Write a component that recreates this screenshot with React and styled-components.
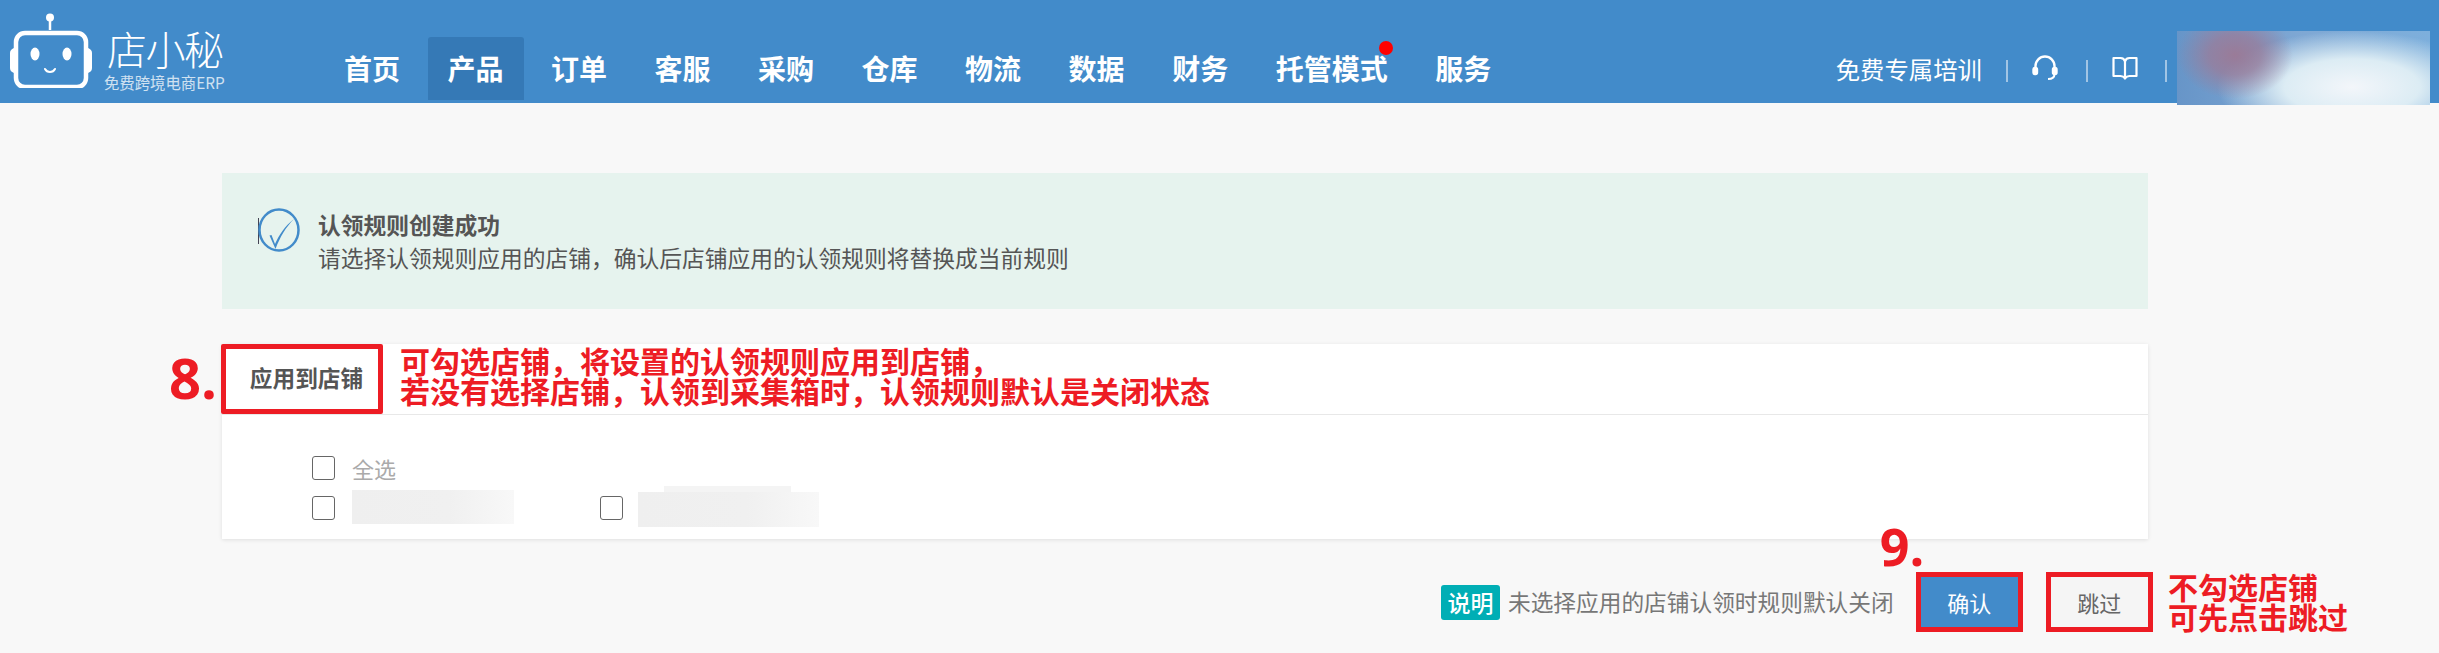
import React from 'react';
import styled, { createGlobalStyle } from 'styled-components';

const FONT = '"Noto Sans CJK SC", "Noto Sans", sans-serif';
const RED = '#ed1c24';

const Global = createGlobalStyle`
  html, body { margin: 0; padding: 0; background: #f8f8f8; }
  body { font-family: ${FONT}; width: 2439px; height: 653px; overflow: hidden; }
  * { box-sizing: border-box; }
`;

const Header = styled.header`
  display: flex;
  align-items: flex-start;
  height: 103px;
  background: #428bca;
  color: #fff;
`;
const Logo = styled.div`
  display: flex;
  width: 324px;
  flex: none;
  padding: 12px 0 0 9px;
`;
const LogoText = styled.div`
  margin: 13px 0 0 11px;
  display: flex;
  flex-direction: column;
`;
const LogoName = styled.div`
  font-size: 40px;
  line-height: 46px;
  font-weight: 300;
  letter-spacing: -1.500px;
  white-space: nowrap;
  margin-left: 3px;
`;
const LogoSub = styled.div`
  font-size: 16px;
  line-height: 18px;
  margin-top: 2px;
  opacity: 0.75;
  white-space: nowrap;
  transform: scaleX(0.96);
  transform-origin: left;
`;
const Nav = styled.nav`
  display: flex;
  gap: 7.5px;
  margin-top: 37px;
`;
const NavItem = styled.a`
  position: relative;
  min-width: 96px;
  height: 63px;
  padding: 0 20px;
  border-radius: 3px 3px 0 0;
  text-align: center;
  font-size: 28px;
  line-height: 62px;
  font-weight: 700;
  white-space: nowrap;
  background: ${p => (p.$active ? '#3579b6' : 'transparent')};
`;
const Dot = styled.span`
  position: absolute;
  right: 15px;
  top: 4px;
  width: 14px;
  height: 14px;
  border-radius: 50%;
  background: #f00;
`;
const Tools = styled.div`
  display: flex;
  align-items: center;
  gap: 24px;
  margin: 54px 0 0 auto;
  height: 28px;
  font-size: 24.400px;
  white-space: nowrap;
`;
const Sep = styled.span`
  width: 2px;
  height: 22px;
  margin-top: 6px;
  background: rgba(255, 255, 255, 0.5);
`;
const ToolIcon = styled.svg`
  display: block;
  flex: none;
  width: ${p => p.$w}px;
  height: 26px;
`;
const Account = styled.div`
  flex: none;
  width: 253px;
  height: 74px;
  margin: 31px 9px 0 10px;
  background:
    radial-gradient(ellipse 58px 44px at 58px 24px, #9a7b98 0%, rgba(154, 123, 152, 0.75) 45%, rgba(154, 123, 152, 0) 100%),
    radial-gradient(ellipse 135px 56px at 175px 56px, #f3f6fa 0%, #dcecf4 50%, rgba(220, 236, 244, 0) 100%),
    linear-gradient(90deg, #6795c8, #7fa8d4 50%, #7dafdc);
`;

const Main = styled.main`
  width: 2148px;
  padding: 70px 0 0 222px;
`;
const Alert = styled.section`
  display: flex;
  gap: 18px;
  height: 136px;
  padding: 35px 36px;
  background: #e6f3ee;
`;
const AlertIcon = styled.svg`
  flex: none;
  width: 42px;
  height: 44px;
`;
const AlertBody = styled.div`
  color: #555;
  font-size: 22.750px;
  line-height: 33px;
  white-space: nowrap;
`;
const AlertTitle = styled.div`
  font-weight: 700;
`;

const Panel = styled.section`
  height: 195px;
  margin-top: 35px;
  background: #fff;
  box-shadow: 0 1px 4px rgba(0, 0, 0, 0.1);
`;
const PanelHead = styled.div`
  display: flex;
  align-items: center;
  gap: 17px;
  height: 71px;
  border-bottom: 1px solid #e8e8e8;
`;
const Tab = styled.div`
  position: relative;
  flex: none;
  width: 162px;
  height: 70px;
  margin: -1px 0 0 -1px;
  padding-left: 9px;
  border: 5px solid ${RED};
  border-radius: 2px;
  text-align: center;
  font-size: 22.670px;
  line-height: 58px;
  font-weight: 700;
  color: #555;
`;
const StepNo = styled.span`
  position: absolute;
  left: ${p => p.$x}px;
  top: ${p => p.$y}px;
  font-size: ${p => p.$size}px;
  line-height: ${p => p.$size}px;
  font-weight: 700;
  font-family: "Open Sans", "Noto Sans", sans-serif;
  color: ${RED};
`;
const Note = styled.div`
  color: ${RED};
  font-size: 30px;
  line-height: 30px;
  font-weight: 700;
  white-space: nowrap;
`;
const HeadNote = styled(Note)`
  margin-top: -8px;
`;
const PanelBody = styled.div`
  display: flex;
  flex-direction: column;
  gap: 16px;
  padding: 41px 0 0 90px;
`;
const Row = styled.div`
  display: flex;
  align-items: center;
  height: 24px;
`;
const ShopItem = styled.div`
  display: flex;
  align-items: center;
  width: 288px;
`;
const Check = styled.span`
  flex: none;
  width: 23px;
  height: 24px;
  border: 1px solid #666;
  border-radius: 3px;
  background: #fff;
`;
const CheckLabel = styled.span`
  margin-left: 17px;
  font-size: 22px;
  line-height: 24px;
  color: #aaa;
`;
const Blurred = styled.span`
  position: relative;
  width: ${p => p.$w}px;
  height: ${p => p.$h}px;
  margin-left: ${p => p.$ml}px;
  margin-top: ${p => p.$mt}px;
  background: linear-gradient(90deg, #efefef 0%, #f0f0f0 60%, #f8f8f8 100%);
`;
const BlurredTop = styled(Blurred)`
  &::before {
    content: '';
    position: absolute;
    left: 26px;
    top: -6px;
    width: 127px;
    height: 6px;
    background: #f4f4f4;
  }
`;

const Footer = styled.div`
  position: relative;
  display: flex;
  align-items: center;
  height: 50px;
  margin-top: 38px;
`;
const Tag = styled.span`
  flex: none;
  width: 59px;
  height: 35px;
  margin: 0 8px 0 1219px;
  border-radius: 3px;
  background: #00aeb5;
  color: #fff;
  text-align: center;
  font-size: 23px;
  line-height: 34px;
  font-weight: 500;
`;
const Hint = styled.span`
  font-size: 22.700px;
  line-height: 30px;
  color: #777;
  white-space: nowrap;
`;
const Button = styled.button`
  position: relative;
  flex: none;
  width: 97px;
  height: 50px;
  margin-left: ${p => p.$ml}px;
  border: 0;
  outline: 5px solid ${RED};
  border-radius: 0;
  padding: 0;
  font-family: ${FONT};
  font-size: 22px;
  background: ${p => (p.$primary ? '#428bca' : '#f5f5f5')};
  color: ${p => (p.$primary ? '#fff' : '#666')};
`;
const SideNote = styled(Note)`
  position: absolute;
  left: 1946px;
  top: -6px;
`;

export default function App() {
  const nav = ['首页', '产品', '订单', '客服', '采购', '仓库', '物流', '数据', '财务', '托管模式', '服务'];
  return (
    <>
      <Global />
      <Header>
        <Logo>
          <svg width="84" height="76" viewBox="0 0 84 76" fill="none">
            <circle cx="41" cy="5.5" r="4" fill="#fff" />
            <path d="M41 8v10" stroke="#fff" strokeWidth="2.5" />
            <path d="M31 20.5h20" stroke="#fff" strokeWidth="3" />
            <rect x="7" y="21" width="70" height="54" rx="9" stroke="#fff" strokeWidth="4.5" />
            <path d="M5 36c-3 1-4 3-4 5v15c0 2 1 4 4 5zM79 36c3 1 4 3 4 5v15c0 2-1 4-4 5z" fill="#fff" />
            <ellipse cx="26" cy="42" rx="4.5" ry="6.5" fill="#fff" />
            <ellipse cx="58" cy="42" rx="4.5" ry="6.5" fill="#fff" />
            <path d="M36 57c2 4 8 4 10 0" stroke="#fff" strokeWidth="2" strokeLinecap="round" />
          </svg>
          <LogoText>
            <LogoName>店小秘</LogoName>
            <LogoSub>免费跨境电商ERP</LogoSub>
          </LogoText>
        </Logo>
        <Nav>
          {nav.map(n => (
            <NavItem key={n} $active={n === '产品'}>
              {n}
              {n === '托管模式' && <Dot />}
            </NavItem>
          ))}
        </Nav>
        <Tools>
          <span>免费专属培训</span>
          <Sep />
          <ToolIcon $w={30} viewBox="0 0 30 26" fill="none" stroke="#fff" strokeWidth="2.4">
            <path d="M3.5 15V11a9.5 9.5 0 0 1 19 0v4" />
            <rect x="1.5" y="13" width="3.5" height="6" rx="1.5" fill="#fff" />
            <rect x="21" y="13" width="3.5" height="6" rx="1.5" fill="#fff" />
            <path d="M22.5 19c0 3-2 5-6.5 5" strokeWidth="2" />
          </ToolIcon>
          <Sep />
          <ToolIcon $w={29} viewBox="0 0 29 26" fill="none" stroke="#fff" strokeWidth="2.2" strokeLinejoin="round">
            <path d="M1.500 3h7c2.500 0 4 1.500 4.500 3.500C13.500 4.500 15 3 17.500 3h7v18h-7c-2 0-3.500 1-4.500 2.500-1-1.500-2.500-2.500-4.500-2.500h-7z" />
            <path d="M13 6.500V22" />
          </ToolIcon>
          <Sep />
        </Tools>
        <Account />
      </Header>
      <Main>
        <Alert>
          <AlertIcon viewBox="0 0 42 44" fill="none">
            <path d="M0.500 10v26" stroke="#445" strokeWidth="1" />
            <ellipse cx="21" cy="22" rx="19.500" ry="20.500" stroke="#428bca" strokeWidth="2.500" />
            <path d="M11.500 27.500L13.500 27L17 36C21 27 27 18 36 11C28 19 22 29 17.500 41Z" fill="#428bca" />
          </AlertIcon>
          <AlertBody>
            <AlertTitle>认领规则创建成功</AlertTitle>
            <div>请选择认领规则应用的店铺，确认后店铺应用的认领规则将替换成当前规则</div>
          </AlertBody>
        </Alert>
        <Panel>
          <PanelHead>
            <Tab>
              应用到店铺
              <StepNo $x={-57} $y={0} $size={56}>8.</StepNo>
            </Tab>
            <HeadNote>
              可勾选店铺，将设置的认领规则应用到店铺，
              <br />
              若没有选择店铺，认领到采集箱时，认领规则默认是关闭状态
            </HeadNote>
          </PanelHead>
          <PanelBody>
            <Row>
              <Check />
              <CheckLabel>全选</CheckLabel>
            </Row>
            <Row>
              <ShopItem>
                <Check />
                <Blurred $w={162} $h={34} $ml={17} $mt={-2} />
              </ShopItem>
              <ShopItem>
                <Check />
                <BlurredTop $w={181} $h={35} $ml={15} $mt={2} />
              </ShopItem>
            </Row>
          </PanelBody>
        </Panel>
        <Footer>
          <Tag>说明</Tag>
          <Hint>未选择应用的店铺认领时规则默认关闭</Hint>
          <Button $primary $ml={27}>
            确认
            <StepNo $x={-41} $y={-57} $size={52}>9.</StepNo>
          </Button>
          <Button $ml={33}>跳过</Button>
          <SideNote>
            不勾选店铺
            <br />
            可先点击跳过
          </SideNote>
        </Footer>
      </Main>
    </>
  );
}
